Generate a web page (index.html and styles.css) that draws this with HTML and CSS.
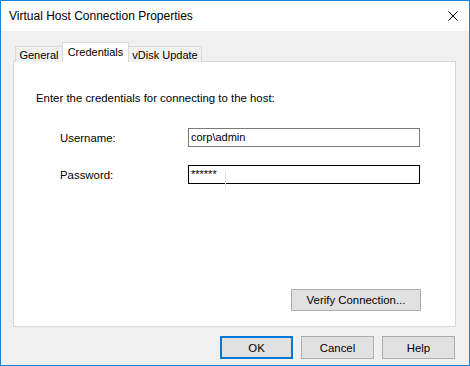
FILE: index.html
```html
<!DOCTYPE html>
<html lang="en">
<head>
    <meta charset="UTF-8">
    <title>Virtual Host Connection Properties</title>
    <link rel="stylesheet" href="styles.css">
</head>
<body>

    <div class="window">
        <div class="titlebar">
            <span class="title">Virtual Host Connection Properties</span>
            <svg class="close" width="10" height="10" viewBox="0 0 10 10">
                <path d="M0.5 0.5L9.5 9.5M9.5 0.5L0.5 9.5" stroke="#000" stroke-width="1"/>
            </svg>
        </div>

        <div class="content">
            <div class="tabs">
                <div class="tab tab-general">General</div>
                <div class="tab tab-active">Credentials</div>
                <div class="tab tab-vdisk">vDisk Update</div>
            </div>

            <div class="panel">
                <p class="intro">Enter the credentials for connecting to the host:</p>

                <div class="field">
                    <label>Username:</label>
                    <div class="textbox">corp\admin</div>
                </div>
                <div class="field">
                    <label>Password:</label>
                    <div class="textbox textbox-focus">******<span class="ibeam"></span></div>
                </div>

                <div class="panel-actions">
                    <button class="btn btn-verify">Verify Connection...</button>
                </div>
            </div>

            <div class="dialog-buttons">
                <button class="btn btn-default">OK</button>
                <button class="btn">Cancel</button>
                <button class="btn">Help</button>
            </div>
        </div>
    </div>

</body>
</html>
```

FILE: styles.css
```css
* {
    margin: 0;
    padding: 0;
    box-sizing: border-box;
}

body {
    font-family: 'Liberation Sans', Arial, sans-serif;
    font-size: 11px;
    color: #000;
    background: #fff;
}

.window {
    width: 470px;
    height: 366px;
    border: 1px solid #1883d7;
    display: flex;
    flex-direction: column;
    background: #f0f0f0;
}

.titlebar {
    height: 30px;
    background: #fff;
    display: flex;
    align-items: center;
    justify-content: space-between;
    padding: 0 11px 0 8px;
}

.title {
    font-size: 12px;
}

.content {
    flex: 1;
    display: flex;
    flex-direction: column;
    padding: 12px 13px 5px 12px;
}

.tabs {
    display: flex;
    height: 19px;
    margin-bottom: -1px;
    padding-left: 2px;
    align-items: flex-end;
    position: relative;
    z-index: 1;
}

.tab {
    height: 16px;
    border: 1px solid #d9d9d9;
    border-bottom: none;
    background: #f0f0f0;
    display: flex;
    align-items: center;
    justify-content: center;
    padding-top: 1px;
}

.tab-general {
    width: 47px;
    border-right: none;
}

.tab-active {
    width: 67px;
    height: 20px;
    background: #fff;
    padding-bottom: 2px;
}

.tab-vdisk {
    width: 73px;
    border-left: none;
}

.panel {
    height: 266px;
    background: #fff;
    border: 1px solid #d9d9d9;
    display: flex;
    flex-direction: column;
    padding: 29px 34px 15px 22px;
}

.intro {
    font-size: 11.4px;
    line-height: 14px;
    margin-bottom: 23px;
}

.field {
    display: flex;
    align-items: center;
    margin-bottom: 18px;
}

.field label {
    width: 152px;
    padding-left: 24px;
    font-size: 11.4px;
}

.textbox {
    width: 232px;
    height: 19px;
    border: 1px solid #7a7a7a;
    padding: 1px 2px;
    line-height: 15px;
    position: relative;
}

.textbox-focus {
    border-color: #000;
}

.ibeam {
    position: absolute;
    left: 36px;
    top: 5px;
    width: 1px;
    height: 18px;
    background: #e6e6e6;
}

.panel-actions {
    margin-top: auto;
    display: flex;
    justify-content: flex-end;
}

.btn {
    font-family: inherit;
    font-size: 11.4px;
    width: 73px;
    height: 23px;
    background: #e1e1e1;
    border: 1px solid #adadad;
    color: #000;
}

.btn-verify {
    width: 130px;
    height: 22px;
}

.btn-default {
    border: 2px solid #0078d7;
}

.dialog-buttons {
    display: flex;
    justify-content: flex-end;
    gap: 8px;
    margin-top: 9px;
    padding-right: 1px;
}
```
